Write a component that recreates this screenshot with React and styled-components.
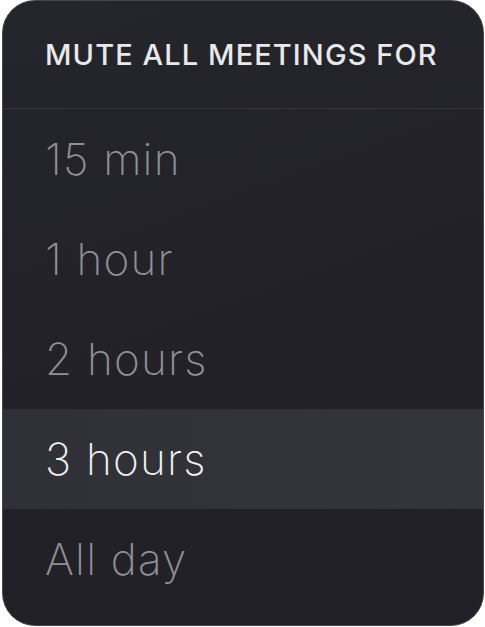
import React from "react";
import styled, { createGlobalStyle } from "styled-components";

const Global = createGlobalStyle`
  html, body { margin: 0; padding: 0; background: #ffffff; }
  body { font-family: Inter, "Noto Sans", sans-serif; }
`;

const Card = styled.div`
  box-sizing: border-box;
  margin-left: 2px;
  width: 482px;
  height: 626px;
  border-radius: 33px;
  border: 1px solid #46464c;
  background: linear-gradient(160deg, #25252c 0%, #222128 60%, #212027 100%);
  overflow: hidden;
  display: flex;
  flex-direction: column;
`;

const Header = styled.div`
  height: 108px;
  box-sizing: border-box;
  display: flex;
  align-items: center;
  padding-left: 42px;
  padding-bottom: 1px;
  border-bottom: 1px solid #37363d;
  color: #e9e9ea;
  font-size: 29px;
  font-weight: 500;
  letter-spacing: 1.1px;
  text-transform: uppercase;
`;

const List = styled.div`
  display: flex;
  flex-direction: column;
`;

const Item = styled.div`
  height: 100px;
  display: flex;
  align-items: center;
  padding-left: 42px;
  font-size: 44px;
  font-weight: 200;
  letter-spacing: 1.2px;
  color: ${(p) => (p.$active ? "#f0f0f2" : "#909096")};
  background: ${(p) =>
    p.$active ? "linear-gradient(90deg, #303037 0%, #34343b 100%)" : "transparent"};
`;

const options = ["15 min", "1 hour", "2 hours", "3 hours", "All day"];

export default function App() {
  return (
    <>
      <Global />
      <Card>
        <Header>Mute all meetings for</Header>
        <List>
          {options.map((o) => (
            <Item key={o} $active={o === "3 hours"}>
              {o}
            </Item>
          ))}
        </List>
      </Card>
    </>
  );
}
